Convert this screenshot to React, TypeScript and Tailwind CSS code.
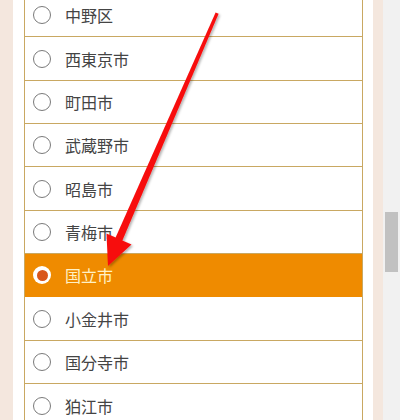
import React from "react";

const rows: { name: string; h: string; selected?: boolean }[] = [
  { name: "中野区", h: "h-[44px]" },
  { name: "西東京市", h: "h-[44px]" },
  { name: "町田市", h: "h-[43px]" },
  { name: "武蔵野市", h: "h-[43px]" },
  { name: "昭島市", h: "h-[44px]" },
  { name: "青梅市", h: "h-[43px]" },
  { name: "国立市", h: "h-[43px]", selected: true },
  { name: "小金井市", h: "h-[44px]" },
  { name: "国分寺市", h: "h-[43px]" },
  { name: "狛江市", h: "h-[44px]" },
];

export default function App() {
  return (
    <div
      className="relative flex h-[420px] w-[400px] overflow-hidden bg-white"
      style={{ fontFamily: '"Noto Sans CJK JP", "Noto Sans", sans-serif' }}
    >
      <div className="w-[13px] shrink-0 bg-[#f4e7de]" />
      <div className="w-[360px] shrink-0 bg-white pl-[11px] pr-[10px]">
        <div className="-mt-[7px] border-x border-[#c9a862]">
          {rows.map((r) => (
            <div
              key={r.name}
              className={
                r.selected
                  ? `flex items-center ${r.h} bg-[#ef8b00] border-b border-[#ef8b00]`
                  : `flex items-center ${r.h} bg-white border-b border-[#c9a862]`
              }
            >
              <div className="ml-[8px] flex h-[18px] w-[18px] items-center justify-center">
                {r.selected ? (
                  <div className="flex h-[18px] w-[18px] items-center justify-center rounded-full bg-white">
                    <div className="h-[11px] w-[11px] rounded-full bg-[#d9561c]" />
                  </div>
                ) : (
                  <div className="h-[18px] w-[18px] rounded-full border border-[#7a7a7a] bg-white" />
                )}
              </div>
              <span
                className={
                  r.selected
                    ? "ml-[14px] text-[16px] leading-none text-[#fff1c6]"
                    : "ml-[14px] text-[16px] leading-none text-[#444444]"
                }
              >
                {r.name}
              </span>
            </div>
          ))}
        </div>
      </div>
      <div className="w-[10px] shrink-0 bg-[#f4e7de]" />
      <div className="flex w-[17px] shrink-0 flex-col bg-[#f1f1f1] px-[2px] pt-[212px]">
        <div className="h-[60px] w-full bg-[#c1c1c1]" />
      </div>

      <svg
        className="pointer-events-none absolute left-0 top-0"
        width="400"
        height="420"
        viewBox="0 0 400 420"
      >
        <defs>
          <filter id="sh" x="-20%" y="-20%" width="140%" height="140%">
            <feDropShadow dx="1.5" dy="1.5" stdDeviation="1.2" floodColor="#000" floodOpacity="0.3" />
          </filter>
        </defs>
        <polygon
          points="215.6,12.4 218.6,13.8 122.4,240.6 131.5,244.5 108,266 106.5,233.5 115.6,237.4"
          fill="#f70d0d"
          filter="url(#sh)"
        />
      </svg>
    </div>
  );
}
